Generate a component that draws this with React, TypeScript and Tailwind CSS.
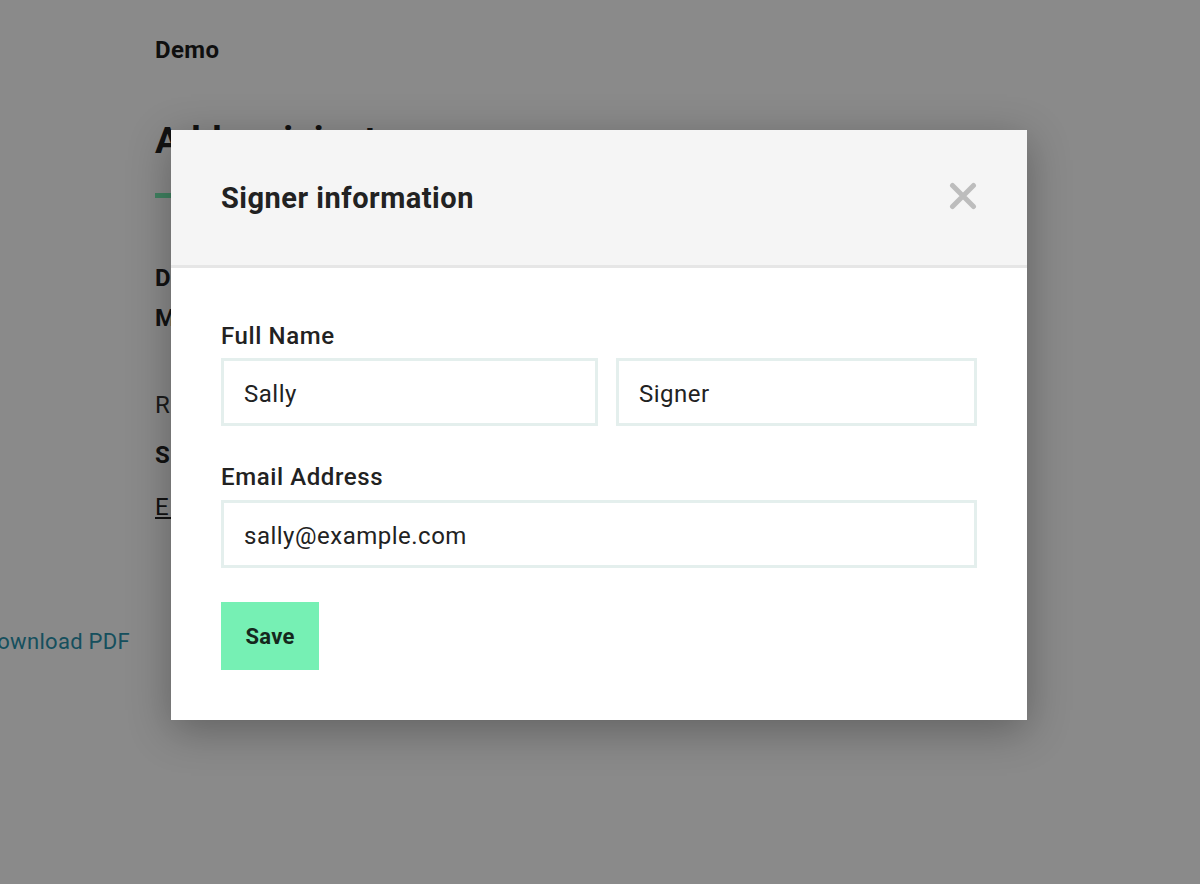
import React from "react";

function CloseIcon() {
  return (
    <svg width="28" height="28" viewBox="0 0 28 28" aria-hidden="true">
      <path d="M3.5 3.5 L24.5 24.5 M24.5 3.5 L3.5 24.5" stroke="#bdbdbd" strokeWidth="5" strokeLinecap="round" fill="none" />
    </svg>
  );
}

function Field({ value, className }: { value: string; className?: string }) {
  return (
    <div
      className={`h-[68px] border-[3px] border-[#e4efed] bg-white pl-[20px] pt-[3px] flex items-center text-[24px] tracking-[0.5px] text-[#222] ${className ?? ""}`}
    >
      {value}
    </div>
  );
}

export default function App() {
  return (
    <div className="relative h-[884px] w-full overflow-hidden bg-white font-['Roboto',sans-serif] text-[#222]">
      {/* Underlying page */}
      <div className="pl-[155px] pt-[35px] text-[24px] font-bold leading-[30px] tracking-[0.4px] text-[#1c1c1c]">Demo</div>
      <div className="mt-[54px] flex">
        <div className="w-[155px] shrink-0 pr-[25px] pt-[506px]">
          <div className="flex justify-end whitespace-nowrap text-[22px] tracking-[0.3px] text-[#2a93ad]">Download PDF</div>
        </div>
        <div className="flex flex-col">
          <h1 className="text-[37px] font-bold leading-[44px] whitespace-nowrap">Add recipients</h1>
          <div className="mt-[30px] h-[5px] w-[64px] bg-[#76f0b4]" />
          <div className="mt-[60px] text-[24px] font-bold leading-[40px] tracking-[2px] whitespace-nowrap">
            <div>Document: Sample contract</div>
            <div>Message: Please sign this</div>
          </div>
          <div className="mt-[52px] text-[24px] leading-[30px] tracking-[3px] text-[#333] whitespace-nowrap">Recipients</div>
          <div className="mt-[20px] text-[24px] font-bold leading-[30px] tracking-[3px] whitespace-nowrap">Sally Signer</div>
          <div className="mt-[22px] text-[24px] leading-[30px] tracking-[3px] underline whitespace-nowrap">Edit signer</div>
        </div>
      </div>

      {/* Overlay */}
      <div className="absolute inset-0 bg-black/[0.46]">
        <div className="ml-[171px] mt-[130px] w-[856px] bg-white shadow-[0_10px_40px_rgba(0,0,0,0.3)]">
          <div className="flex h-[138px] items-center justify-between border-b-[3px] border-[#e6e6e6] bg-[#f5f5f5] pl-[50px] pr-[50px]">
            <h2 className="pt-[2px] text-[29px] font-bold tracking-[0.5px] text-[#222]">Signer information</h2>
            <div className="-mt-[3px]">
              <CloseIcon />
            </div>
          </div>
          <div className="px-[50px] pt-[54px] pb-[50px]">
            <label className="block text-[24px] font-medium leading-[28px] tracking-[0.6px] text-[#222]">Full Name</label>
            <div className="mt-[8px] flex gap-[18px]">
              <Field value="Sally" className="w-[377px]" />
              <Field value="Signer" className="w-[361px]" />
            </div>
            <label className="mt-[37px] block text-[24px] font-medium leading-[28px] tracking-[0.6px] text-[#222]">Email Address</label>
            <Field value="sally@example.com" className="mt-[9px] w-[756px]" />
            <button className="mt-[34px] flex h-[68px] w-[98px] items-center justify-center bg-[#76f0b4] text-[22px] font-bold tracking-[0.3px] text-[#15281d]">
              Save
            </button>
          </div>
        </div>
      </div>
    </div>
  );
}
